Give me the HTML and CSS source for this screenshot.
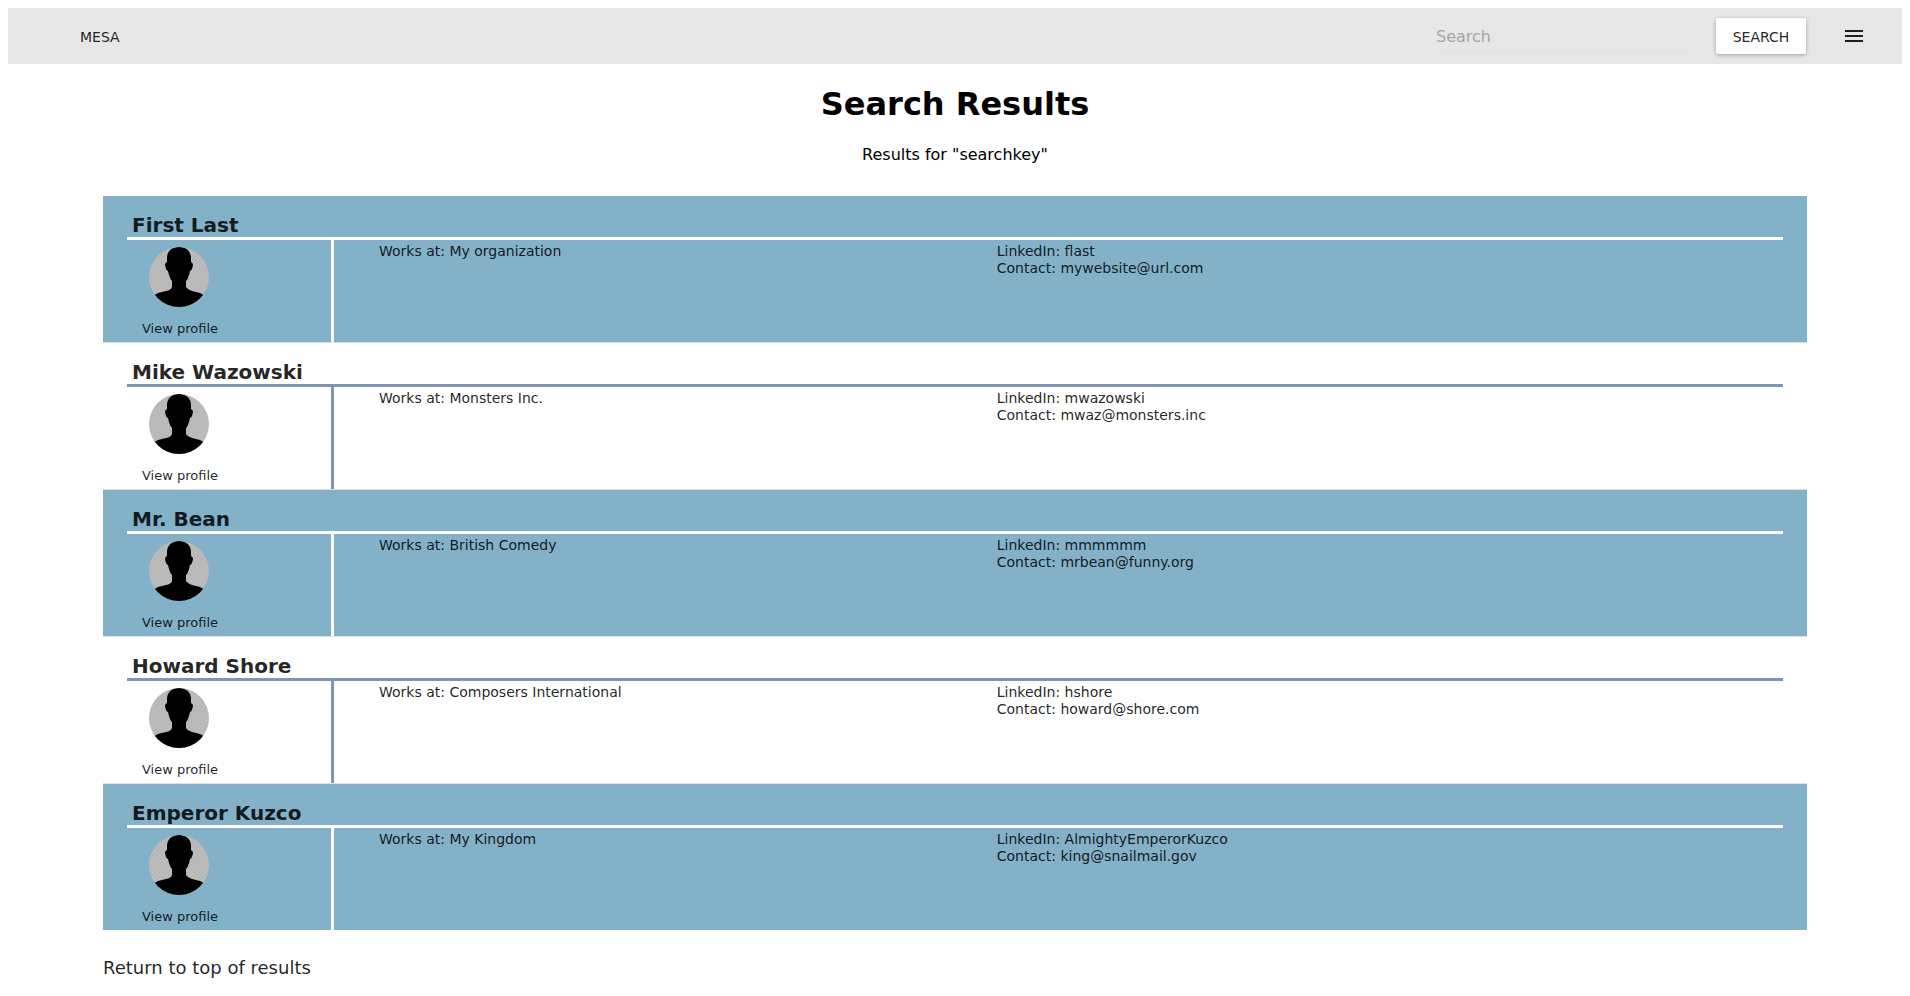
FILE: index.html
```html
<!DOCTYPE html>
<html lang="en">
<head>
<meta charset="utf-8">
<title>Search Results</title>
<link rel="stylesheet" href="styles.css">
</head>
<body>
<svg class="defs" aria-hidden="true">
  <defs>
    <pattern id="hatch" width="4" height="4" patternUnits="userSpaceOnUse">
      <rect width="4" height="4" fill="#bcbcbc"/>
      <path d="M-1 1l2-2M0 4l4-4M3 5l2-2" stroke="#b2b2b2" stroke-width="1"/>
    </pattern>
    <clipPath id="round"><circle cx="30" cy="30" r="30"/></clipPath>
  </defs>
  <symbol id="avatar" viewBox="0 0 60 60">
    <g clip-path="url(#round)">
      <rect width="60" height="60" fill="url(#hatch)"/>
      <path d="M30 0C22 0 18 5 18 11L18 15Q16 16 16 18L17 22Q18 24 19 24L20 28Q21 32 23 34L23 40Q22 43 17 44L9 46Q7 47 4 49L4 60H56V49Q53 47 51 46L43 44Q38 42 37 40L37 34Q39 32 40 28L41 24Q42 24 43 22L44 18Q44 16 42 15L42 11C42 5 38 0 30 0Z" fill="#000"/>
    </g>
  </symbol>
</svg>
<header class="topbar" id="top">
  <a class="brand" href="#">MESA</a>
  <form class="search">
    <input class="search-input" type="search" placeholder="Search" aria-label="Search">
    <button class="search-button" type="button">SEARCH</button>
  </form>
  <button class="menu-button" type="button" aria-label="Menu">
    <svg width="24" height="24" viewBox="0 0 24 24"><path d="M3 18h18v-2H3v2zm0-5h18v-2H3v2zm0-7v2h18V6H3z" fill="currentColor"/></svg>
  </button>
</header>
<main class="page">
  <h1 class="title">Search Results</h1>
  <p class="subtitle">Results for "searchkey"</p>
  <ul class="results">
    <li class="result">
      <h2 class="name">First Last</h2>
      <div class="details">
        <a class="profile" href="#"><svg class="avatar" aria-hidden="true"><use href="#avatar"/></svg><span>View profile</span></a>
        <div class="info"><p>Works at: My organization</p><p>LinkedIn: flast<br>Contact: mywebsite@url.com</p></div>
      </div>
    </li>
    <li class="result">
      <h2 class="name">Mike Wazowski</h2>
      <div class="details">
        <a class="profile" href="#"><svg class="avatar" aria-hidden="true"><use href="#avatar"/></svg><span>View profile</span></a>
        <div class="info"><p>Works at: Monsters Inc.</p><p>LinkedIn: mwazowski<br>Contact: mwaz@monsters.inc</p></div>
      </div>
    </li>
    <li class="result">
      <h2 class="name">Mr. Bean</h2>
      <div class="details">
        <a class="profile" href="#"><svg class="avatar" aria-hidden="true"><use href="#avatar"/></svg><span>View profile</span></a>
        <div class="info"><p>Works at: British Comedy</p><p>LinkedIn: mmmmmm<br>Contact: mrbean@funny.org</p></div>
      </div>
    </li>
    <li class="result">
      <h2 class="name">Howard Shore</h2>
      <div class="details">
        <a class="profile" href="#"><svg class="avatar" aria-hidden="true"><use href="#avatar"/></svg><span>View profile</span></a>
        <div class="info"><p>Works at: Composers International</p><p>LinkedIn: hshore<br>Contact: howard@shore.com</p></div>
      </div>
    </li>
    <li class="result">
      <h2 class="name">Emperor Kuzco</h2>
      <div class="details">
        <a class="profile" href="#"><svg class="avatar" aria-hidden="true"><use href="#avatar"/></svg><span>View profile</span></a>
        <div class="info"><p>Works at: My Kingdom</p><p>LinkedIn: AlmightyEmperorKuzco<br>Contact: king@snailmail.gov</p></div>
      </div>
    </li>
  </ul>
  <a class="to-top" href="#top">Return to top of results</a>
</main>
</body>
</html>
```
FILE: styles.css
```css
* { box-sizing: border-box; }

body {
  margin: 8px;
  background: #fff;
  color: #000;
  font-family: "DejaVu Sans", sans-serif;
}

h1, h2, p, ul { margin: 0; padding: 0; }
a { color: rgba(0, 0, 0, 0.87); text-decoration: none; }

.defs { display: block; width: 0; height: 0; }

.topbar {
  display: flex;
  align-items: center;
  height: 56px;
  padding: 0 36px 0 72px;
  background: #e7e7e7;
}

.brand { padding-top: 2px; font-size: 14px; }

.search {
  display: flex;
  align-items: center;
  gap: 24px;
  margin-left: auto;
}

.search-input {
  width: 256px;
  height: 32px;
  padding: 2px 0 0;
  border: 0;
  border-bottom: 1px solid #dfdfdf;
  border-radius: 0;
  outline: none;
  background: transparent;
  font-family: inherit;
  font-size: 16px;
  appearance: none;
}

.search-input::placeholder { color: #a6a6a6; opacity: 1; }

.search-button {
  width: 90px;
  height: 36px;
  padding: 2px 0 0;
  border: 0;
  border-radius: 2px;
  background: #fff;
  box-shadow: 0 1px 5px rgba(0, 0, 0, 0.2), 0 1px 3px rgba(0, 0, 0, 0.14);
  color: rgba(0, 0, 0, 0.87);
  font-family: inherit;
  font-size: 14px;
}

.menu-button {
  display: flex;
  margin-left: 36px;
  padding: 0;
  border: 0;
  background: none;
  color: rgba(0, 0, 0, 0.87);
}

.page { padding: 22px 95px 0; }

.title {
  font-size: 32px;
  line-height: 37px;
  text-align: center;
}

.subtitle {
  margin: 22px 0 32px;
  font-size: 16px;
  line-height: 19px;
  text-align: center;
}

.results { list-style: none; }

.result {
  --rule: #8094b4;
  padding: 17px 24px 0;
  border-bottom: 1px solid #e0e0e0;
  color: rgba(0, 0, 0, 0.87);
}

.result:nth-child(odd) { --rule: #fff; background: #82b1c8; }
.result:last-child { border-bottom: 0; }

.name {
  padding: 0 5px;
  border-bottom: 3px solid var(--rule);
  font-size: 20px;
  line-height: 24px;
}

.details {
  display: grid;
  grid-template-columns: 1fr 7fr;
  min-height: 102px;
}

.profile {
  display: flex;
  flex-direction: column;
  align-items: flex-start;
  gap: 14px;
  padding: 7px 0 0 15px;
  border-right: 3px solid var(--rule);
  font-size: 13px;
  line-height: 16px;
}

.avatar { width: 60px; height: 60px; margin-left: 7px; }

.info {
  display: grid;
  grid-template-columns: 11fr 14fr;
  padding: 3px 0 0 45px;
  font-size: 14px;
  line-height: 17px;
}

.to-top {
  display: inline-block;
  margin: 27px 0 16px;
  font-size: 18px;
  line-height: 22px;
}
```
